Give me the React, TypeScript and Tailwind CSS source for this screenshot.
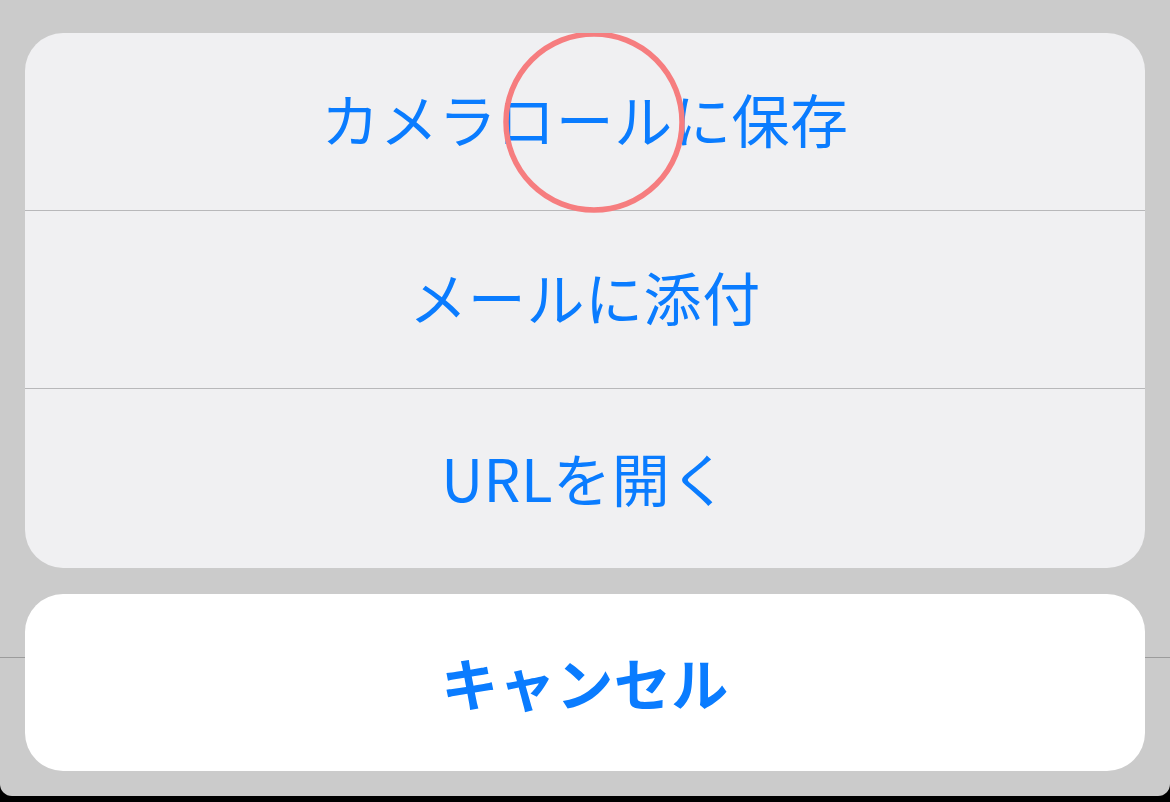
import React from "react";

const font = { fontFamily: '"Noto Sans CJK JP", "Noto Sans", sans-serif' };

export default function App() {
  return (
    <div className="w-[1170px] h-[802px] bg-black overflow-hidden" style={font}>
      <div className="relative h-[796px] bg-[#cbcbcb] rounded-b-[12px] pt-[33px] px-[25px]">
        <div className="absolute left-0 right-0 top-[657px] h-px bg-[#9c9c9c]" />
        <div className="relative flex flex-col h-[535px] rounded-[38px] bg-[#f0f0f2] overflow-hidden">
          <div className="h-[178px] flex items-center justify-center pb-[6px] text-[58px] tracking-[0.6px] text-[#0a7cff] border-b border-[#b8b8ba]">
            カメラロールに保存
          </div>
          <div className="h-[178px] flex items-center justify-center pb-[6px] text-[58px] tracking-[0.6px] text-[#0a7cff] border-b border-[#b8b8ba]">
            メールに添付
          </div>
          <div className="flex-1 flex items-center justify-center pb-[2px] text-[58px] tracking-[0.6px] text-[#0a7cff]">
            URLを開く
          </div>
          <svg className="absolute left-[476px] top-[-4px]" width="186" height="186" viewBox="0 0 186 186">
            <circle cx="93" cy="93" r="88" fill="none" stroke="#f67d7f" strokeWidth="5.5" />
          </svg>
        </div>
        <div className="relative mt-[26px] h-[177px] rounded-[38px] bg-white flex items-center justify-center pb-[2px] text-[57px] tracking-[0.5px] font-bold text-[#0a7cff]">
          キャンセル
        </div>
      </div>
    </div>
  );
}
